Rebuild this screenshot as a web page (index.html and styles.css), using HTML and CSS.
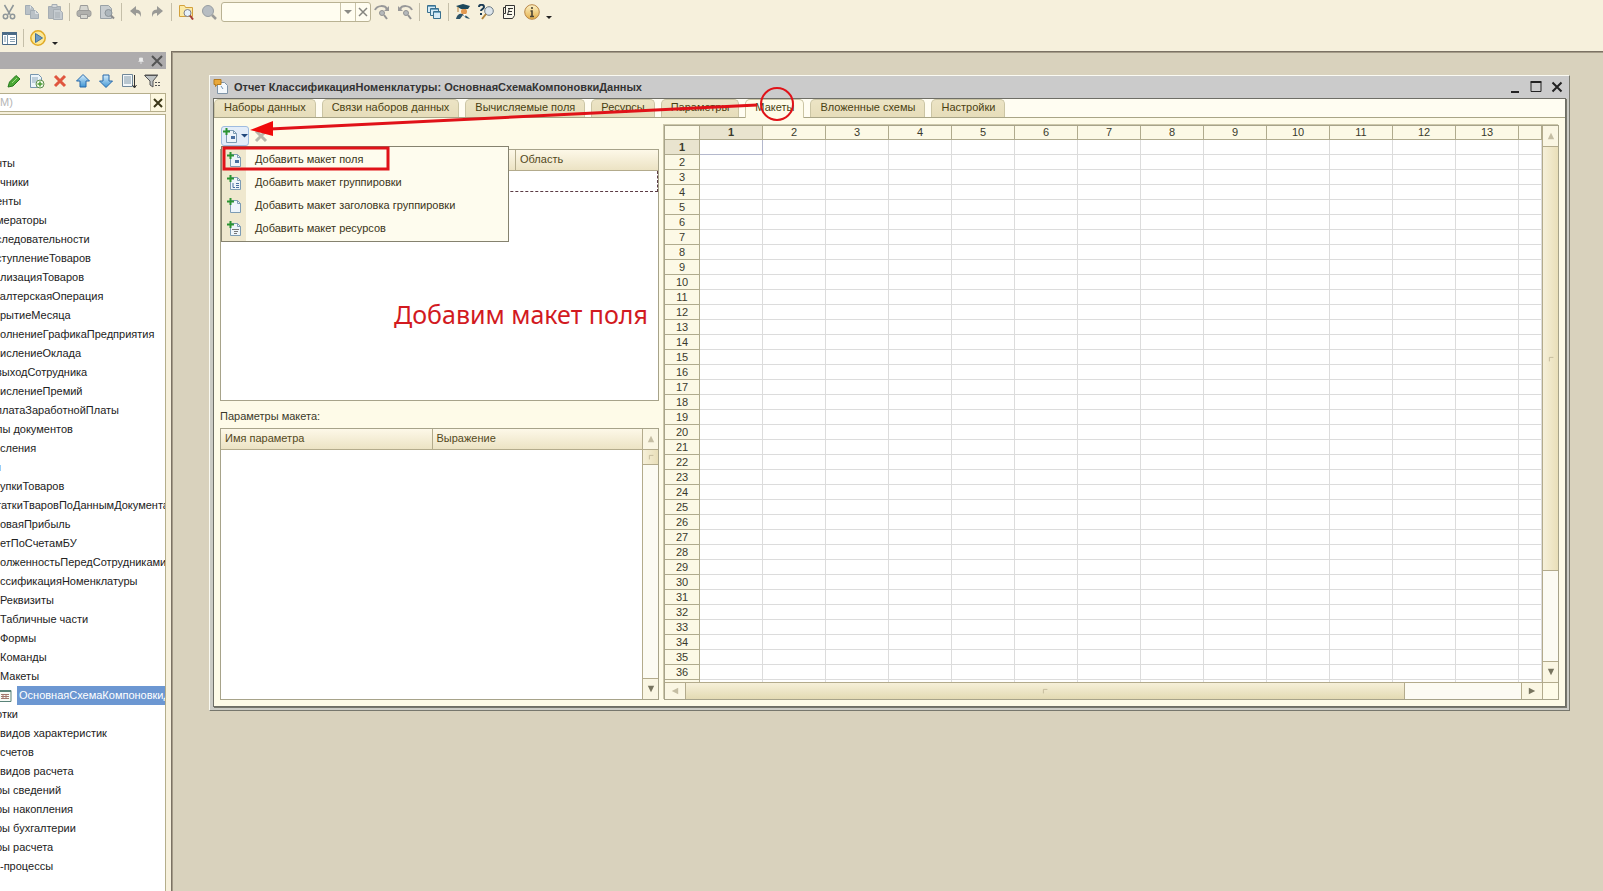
FILE: index.html
```
<!DOCTYPE html>
<html lang="ru">
<head>
<meta charset="utf-8">
<title>Конфигуратор</title>
<link rel="stylesheet" href="styles.css">
</head>
<body>
<svg class="defs" aria-hidden="true">
  <defs>
    <linearGradient id="gold" x1="0" y1="0" x2="0" y2="1"><stop offset="0" stop-color="#fdf3c8"/><stop offset="1" stop-color="#e5b04a"/></linearGradient>
    <linearGradient id="blue" x1="0" y1="0" x2="0" y2="1"><stop offset="0" stop-color="#d8effc"/><stop offset="1" stop-color="#3f95d4"/></linearGradient>
    <symbol id="sheet" viewBox="0 0 16 16"><path d="M3.500 2.500h7l3 3v9h-10z" fill="#eef5fa" stroke="#7d9cb4"/><path d="M10.500 2.500v3h3" fill="none" stroke="#7d9cb4"/><path d="M3.500 0v7M0 3.500h7" stroke="#2b9432" stroke-width="2"/></symbol>
  </defs>
</svg>
<div class="app">
  <header class="toolbars">
    <div class="bar">
      <button class="tool" aria-label="Вырезать"><svg viewBox="0 0 16 16" fill="none" stroke="#8e9699" stroke-width="1.500"><path d="M3.500 1l5.500 9.500M12.500 1L7 10.500"/><circle cx="4.500" cy="12.500" r="2.200"/><circle cx="11.500" cy="12.500" r="2.200"/></svg></button>
      <button class="tool" aria-label="Копировать"><svg viewBox="0 0 16 16" fill="#b9c1c7" stroke="#a3adb5"><path d="M1.500 1.500h5l3 3v6h-8z"/><path d="M6.500 6.500h5l3 3v5h-8z"/><path d="M11.500 6.500v3h3M6.500 1.500v3" fill="none" stroke="#dfe3e5"/></svg></button>
      <button class="tool" aria-label="Вставить"><svg viewBox="0 0 16 16" fill="#b5bbc0" stroke="#a6adb3"><path d="M1.500 2.500h12v12h-12z"/><path d="M5 .500h5v3H5z" fill="#d5d8da"/><path d="M6.500 5.500h6l3 3v7h-9z" fill="#c5cbd0"/><path d="M8 9h5M8 11h5M8 13h5" /></svg></button>
      <span class="sep"></span>
      <button class="tool" aria-label="Печать"><svg viewBox="0 0 16 16" fill="#b0b0ad" stroke="#9b9b99"><path d="M4.500 1.500h7l1 5h-9z" fill="#d6d6d0"/><rect x="1" y="6.500" width="14" height="6" rx="2"/><path d="M4.500 10.500h7v4h-7z" fill="#d6d6d0"/></svg></button>
      <button class="tool" aria-label="Просмотр"><svg viewBox="0 0 16 16"><path d="M1.500 1.500h8l3 3v10h-11z" fill="#c8cdd0" stroke="#9aa2a7"/><circle cx="9.500" cy="9" r="3.500" fill="#adb6bc" stroke="#8d959a"/><path d="M12 11.500l3 3" stroke="#8d8d8d" stroke-width="2"/></svg></button>
      <span class="sep"></span>
      <span class="pair">
        <button class="tool" aria-label="Отменить"><svg viewBox="0 0 16 16"><path d="M2 7l6-5v3.500c4 0 6 3 4.500 7.500C12 10 11 9 8 9v3z" fill="#9a9a96"/></svg></button>
        <button class="tool" aria-label="Вернуть"><svg viewBox="0 0 16 16"><path d="M14 7L8 2v3.500c-4 0-6 3-4.500 7.500C4 10 5 9 8 9v3z" fill="#9a9a96"/></svg></button>
      </span>
      <span class="sep"></span>
      <button class="tool" aria-label="Глобальный поиск"><svg viewBox="0 0 16 16"><path d="M1.500 1.500h5l1 2h7v9h-13z" fill="#fbe9a4" stroke="#d3a13c"/><circle cx="9.500" cy="9" r="3.500" fill="#e6f1fa" stroke="#7e7f8c"/><path d="M12 11.500l3 4" stroke="#a63b33" stroke-width="2"/></svg></button>
      <button class="tool" aria-label="Найти"><svg viewBox="0 0 16 16"><circle cx="7" cy="7" r="5.500" fill="#b7bdc2" stroke="#979da1"/><path d="M11 11l4 4" stroke="#9a9a98" stroke-width="2.500"/></svg></button>
      <div class="combo">
        <input type="text" aria-label="Строка поиска">
        <button aria-label="Список"><svg viewBox="0 0 14 16"><path d="M3 6h8L7 10z" fill="#8b8b86"/></svg></button>
        <button aria-label="Очистить"><svg viewBox="0 0 14 16"><path d="M3 4l8 8M11 4l-8 8" stroke="#85857f" stroke-width="1.500"/></svg></button>
      </div>
      <button class="tool" aria-label="Найти далее"><svg viewBox="0 0 16 16"><path d="M1 6c2-5 10-5 12-1" fill="none" stroke="#999" stroke-width="2"/><path d="M15 2v5h-5z" fill="#999"/><circle cx="8" cy="9" r="2.500" fill="#b5b9bb" stroke="#939393"/><path d="M10 11l3 4" stroke="#939393" stroke-width="2"/></svg></button>
      <button class="tool" aria-label="Найти ранее"><svg viewBox="0 0 16 16"><path d="M15 6C13 1 5 1 3 5" fill="none" stroke="#999" stroke-width="2"/><path d="M1 2v5h5z" fill="#999"/><circle cx="9" cy="9" r="2.500" fill="#b5b9bb" stroke="#939393"/><path d="M11 11l3 4" stroke="#939393" stroke-width="2"/></svg></button>
      <span class="sep"></span>
      <button class="tool" aria-label="Окна"><svg viewBox="0 0 16 16" fill="#d6ebf6" stroke="#39708f"><path d="M1.500 1.500h8v7h-8z"/><path d="M4.500 4.500h8v7h-8z"/><path d="M7.500 7.500h7v7h-7z"/><path d="M2 2.500h7M5 5.500h7M8 8.500h6" stroke="#6fa5c2"/></svg></button>
      <span class="sep"></span>
      <button class="tool" aria-label="Обучение"><svg viewBox="0 0 16 16"><path d="M1 15c1-5 4-6 7-5s5 3 7 5l-4-1-3-3-3 4z" fill="#2d5468"/><circle cx="9" cy="7.500" r="3" fill="#e29950"/><path d="M8 10l2 3 1-3z" fill="#fff"/><path d="M1 2l7-2 7 2-2 3H6z" fill="#1c485c"/><path d="M3 3v5" stroke="#b37c35"/></svg></button>
      <button class="tool" aria-label="Поиск в справке"><svg viewBox="0 0 16 16" fill="none"><path d="M1 3c0-3 5-3 5 0 0 2-3 2-3 4M3 9v2" stroke="#1b3c55" stroke-width="2"/><circle cx="11" cy="7" r="4.300" fill="#dde5eb" stroke="#6d7b86"/><path d="M8 10l-4 5" stroke="#b1853d" stroke-width="2"/></svg></button>
      <button class="tool" aria-label="Синтакс-помощник"><svg viewBox="0 0 16 16"><path d="M4.500 1.500h9v10l-2 3h-9v-5h2z" fill="#faf8ec" stroke="#333"/><path d="M4.500 3.500h-2v6M7 4.500h5M7 7.500h4M6 10.500h5M8.500 4l-2 7" fill="none" stroke="#333"/></svg></button>
      <button class="tool" aria-label="О программе"><svg viewBox="0 0 16 16"><circle cx="8" cy="8" r="7.300" fill="url(#gold)" stroke="#b98645"/><path d="M8 3v2M6.500 7H8v5M6 12.500h4" stroke="#4c4434" stroke-width="1.600" fill="none"/></svg></button>
      <svg class="caret" viewBox="0 0 6 16"><path d="M0 12h6l-3 3z" fill="#222"/></svg>
    </div>
    <div class="bar">
      <button class="tool" aria-label="Окно конфигурации"><svg viewBox="0 0 16 16"><path d="M1.500 2.500h14v12h-14z" fill="#fff" stroke="#4a6a86"/><path d="M1 3.500h15" stroke="#4a6a86" stroke-width="3"/><path d="M6.500 4v10M3 7h2M3 9h2M3 11h2" stroke="#7895aa"/><path d="M9 7.500h5M9 9.500h5M9 11.500h5" stroke="#8ba3b3"/></svg></button>
      <span class="sep"></span>
      <button class="tool" aria-label="Начать отладку"><svg viewBox="0 0 16 16"><circle cx="8" cy="8" r="7.200" fill="#fce896" stroke="#e0aa26" stroke-width="1.500"/><path d="M5.500 3.500v9l7-4.500z" fill="#6e9bc4" stroke="#416f9b"/></svg></button>
      <svg class="caret" viewBox="0 0 6 16"><path d="M0 12h6l-3 3z" fill="#222"/></svg>
    </div>
  </header>

  <div class="main">
    <aside class="side">
      <div class="side-title">
        <svg viewBox="0 0 16 16"><path d="M6 4h4v4H6zM4.500 8.500h7M8 9v3" fill="#eee" stroke="#eee"/></svg>
        <button class="tool" aria-label="Закрыть панель"><svg viewBox="0 0 16 16"><path d="M3 3l10 10M13 3L3 13" stroke="#555" stroke-width="2"/></svg></button>
      </div>
      <div class="side-tools">
        <button class="tool" aria-label="Изменить"><svg viewBox="0 0 16 16"><path d="M2 14l1.500-5L10 2.500l4 3.500-7 7z" fill="#4ca836" stroke="#277a1f"/><path d="M6 10l5-5" stroke="#9ddc83"/></svg></button>
        <button class="tool" aria-label="Добавить"><svg viewBox="0 0 16 16"><path d="M1.500 1.500h8l3 3v10h-11z" fill="#edf5fa" stroke="#7796ae"/><path d="M3 5h6M3 7h6M3 9h4" stroke="#8fa9bb"/><circle cx="11" cy="11" r="4" fill="#f2fae8" stroke="#5d8e4e"/><path d="M11 8.500v5M8.500 11h5" stroke="#4b9b36" stroke-width="1.500"/></svg></button>
        <button class="tool" aria-label="Удалить"><svg viewBox="0 0 16 16"><path d="M3 3l10 10M13 3L3 13" stroke="#e0563f" stroke-width="3"/></svg></button>
        <button class="tool" aria-label="Вверх"><svg viewBox="0 0 16 16"><path d="M8 1.500l6.500 6.500h-3.500v6H5V8H1.500z" fill="url(#blue)" stroke="#2769aa"/></svg></button>
        <button class="tool" aria-label="Вниз"><svg viewBox="0 0 16 16"><path d="M8 14.500L1.500 8H5V2h6v6h3.500z" fill="url(#blue)" stroke="#2769aa"/></svg></button>
        <button class="tool" aria-label="Сортировать"><svg viewBox="0 0 16 16"><path d="M1.500 1.500h10v12h-10z" fill="#f3f7f9" stroke="#6f8799"/><path d="M3 4h7M3 6h7M3 8h7M3 10h7" stroke="#8097a7"/><path d="M13.500 2v12M11.500 12l2 3 2-3" stroke="#333" fill="none"/></svg></button>
        <button class="tool" aria-label="Отбор"><svg viewBox="0 0 16 16"><path d="M.500 2.500h13L9 8v6l-3-2V8z" fill="#bfc3c4" stroke="#555"/><path d="M1 2h13M11 9.500h2M14 9.500h2M11 12.500h2M14 12.500h2" stroke="#555"/></svg></button>
      </div>
      <div class="side-search">
        <input type="text" placeholder="М)" aria-label="Поиск">
        <button aria-label="Очистить поиск"><svg viewBox="0 0 14 16"><path d="M3 4l8 8M11 4l-8 8" stroke="#3c3818" stroke-width="2"/></svg></button>
      </div>
      <ul class="tree">
        <li class="cut">нты</li>
        <li>чники</li>
        <li class="cut">енты</li>
        <li class="cut far">мераторы</li>
        <li class="cut">следовательности</li>
        <li class="cut">ступлениеТоваров</li>
        <li>лизацияТоваров</li>
        <li class="cut">галтерскаяОперация</li>
        <li>рытиеМесяца</li>
        <li>олнениеГрафикаПредприятия</li>
        <li>ислениеОклада</li>
        <li class="cut">выходСотрудника</li>
        <li>ислениеПремий</li>
        <li class="cut">платаЗаработнойПлаты</li>
        <li class="cut">лы документов</li>
        <li>сления</li>
        <li class="edge">ы</li>
        <li>упкиТоваров</li>
        <li class="cut">таткиТваровПоДаннымДокумента</li>
        <li>оваяПрибыль</li>
        <li>етПоСчетамБУ</li>
        <li>олженностьПередСотрудниками</li>
        <li>ссификацияНоменклатуры</li>
        <li>Реквизиты</li>
        <li>Табличные части</li>
        <li>Формы</li>
        <li>Команды</li>
        <li>Макеты</li>
        <li class="current"><svg viewBox="0 0 12 14"><path d="M-1 1.500h12v11h-12z" fill="#f6faf6" stroke="#5a8379"/><path d="M-1 2.500h12" stroke="#5a8379"/><path d="M1 5.500h8M1 7.500h8M1 9.500h8M3 5v5M6 5v5" stroke="#a3776f"/></svg><span>ОсновнаяСхемаКомпоновкиДанных</span></li>
        <li class="cut">отки</li>
        <li>видов характеристик</li>
        <li>счетов</li>
        <li>видов расчета</li>
        <li class="cut">ры сведений</li>
        <li class="cut">ры накопления</li>
        <li class="cut">ры бухгалтерии</li>
        <li class="cut">ры расчета</li>
        <li>-процессы</li>
      </ul>
    </aside>

    <main class="desk">
      <section class="window">
        <div class="title">
          <svg class="title-icon" viewBox="0 0 16 16"><path d="M4.500 3.500h7l3 3v8h-10z" fill="#f5f9fc" stroke="#8095a8"/><path d="M1 .500h7v5H4l-1.500 2V5.500H1z" fill="#eaa83a" stroke="#b57a1d"/><path d="M8 7l2 3" stroke="#6f94b8"/></svg>
          <h1>Отчет КлассификацияНоменклатуры: ОсновнаяСхемаКомпоновкиДанных</h1>
          <button class="win" aria-label="Свернуть"><svg viewBox="0 0 16 16"><path d="M4 13h8" stroke="#222" stroke-width="2"/></svg></button>
          <button class="win" aria-label="Развернуть"><svg viewBox="0 0 16 16"><path d="M3 3.500h10v9H3z" fill="none" stroke="#222"/><path d="M2.500 3h11" stroke="#222" stroke-width="2"/></svg></button>
          <button class="win" aria-label="Закрыть"><svg viewBox="0 0 16 16"><path d="M3.500 3.500l9 9M12.500 3.500l-9 9" stroke="#222" stroke-width="2"/></svg></button>
        </div>
        <div class="client">
          <nav class="tabs">
            <button>Наборы данных</button>
            <button>Связи наборов данных</button>
            <button>Вычисляемые поля</button>
            <button>Ресурсы</button>
            <button>Параметры</button>
            <button class="active">Макеты</button>
            <button>Вложенные схемы</button>
            <button>Настройки</button>
          </nav>
          <div class="body">
            <div class="left">
              <div class="local-tools">
                <button class="add" aria-label="Добавить макет"><svg width="16" height="16"><use href="#sheet"/><path d="M8 8h4v3H8z" fill="#496fa0"/></svg><svg width="8" height="16"><path d="M0 6h7L3.500 9.500z" fill="#21487c"/></svg></button>
                <svg class="del" viewBox="0 0 16 16"><path d="M3 3l10 10M13 3L3 13" stroke="#b9b6aa" stroke-width="3"/></svg>
              </div>
              <div class="box templates">
                <table>
                  <colgroup><col class="two-thirds"><col></colgroup>
                  <thead><tr><th></th><th>Область</th></tr></thead>
                  <tbody><tr><td class="dashed" colspan="2"></td></tr></tbody>
                </table>
              </div>
              <div class="menu" role="menu">
                <button role="menuitem"><svg viewBox="0 0 16 16"><use href="#sheet"/><path d="M8 8h4v3H8z" fill="#496fa0"/></svg>Добавить макет поля</button>
                <button role="menuitem"><svg viewBox="0 0 16 16"><use href="#sheet"/><path d="M6 8v4.500h2M9 8.500h3M9 10.500h3M9 12.500h3" fill="none" stroke="#496fa0"/></svg>Добавить макет группировки</button>
                <button role="menuitem"><svg viewBox="0 0 16 16"><use href="#sheet"/></svg>Добавить макет заголовка группировки</button>
                <button role="menuitem"><svg viewBox="0 0 16 16"><use href="#sheet"/><path d="M5 8.500h7M7 10.500h4M7 12.500h3" stroke="#777"/></svg>Добавить макет ресурсов</button>
              </div>
              <p class="caption">Параметры макета:</p>
              <div class="box params">
                <table>
                  <thead><tr><th>Имя параметра</th><th>Выражение</th></tr></thead>
                </table>
                <div class="vscroll">
                  <span class="step head"><svg viewBox="0 0 10 10"><path d="M1 9h8L5 1z" fill="#c4bda3"/></svg></span>
                  <span class="thumb small"><svg viewBox="0 0 10 10"><path d="M3 8V3h5" stroke="#bdb494" fill="none"/></svg></span>
                  <span class="track"></span>
                  <span class="step"><svg viewBox="0 0 10 10"><path d="M1 1h8L5 9z" fill="#77745f"/></svg></span>
                </div>
              </div>
            </div>
            <div class="sheet">
              <div class="cells">
                <table id="grid"></table>
              </div>
              <div class="vscroll">
                <span class="step"><svg viewBox="0 0 10 10"><path d="M1 9h8L5 1z" fill="#c4bda3"/></svg></span>
                <span class="thumb tall"><svg viewBox="0 0 10 10"><path d="M3 8V3h5" stroke="#bdb494" fill="none"/></svg></span>
                <span class="track"></span>
                <span class="step"><svg viewBox="0 0 10 10"><path d="M1 1h8L5 9z" fill="#77745f"/></svg></span>
              </div>
              <div class="hscroll">
                <span class="step"><svg viewBox="0 0 10 10"><path d="M9 1v8L1 5z" fill="#c4bda3"/></svg></span>
                <span class="thumb wide"><svg viewBox="0 0 10 10"><path d="M3 8V3h5" stroke="#bdb494" fill="none"/></svg></span>
                <span class="track"></span>
                <span class="step"><svg viewBox="0 0 10 10"><path d="M1 1v8l8-4z" fill="#77745f"/></svg></span>
              </div>
              <div class="corner"></div>
            </div>
          </div>
        </div>
      </section>
    </main>
  </div>

  <svg class="marks" width="820" height="200" fill="none" stroke="#e01218" aria-hidden="true">
    <path d="M757 105L270 129" stroke-width="3"/>
    <path d="M250 130l23-9v15z" fill="#f00a0a" stroke="none"/>
    <circle cx="777" cy="104" r="16" stroke-width="2"/>
    <rect x="224" y="148" width="164" height="21" stroke-width="3"/>
  </svg>
  <p class="note">Добавим макет поля</p>
</div>
<script src="grid.js"></script>
</body>
</html>
```
FILE: styles.css
```
* { box-sizing: border-box; }
body { margin: 0; font: 11px/13px "Liberation Sans", Arial, sans-serif; color: #222; }
button, input { font: inherit; color: inherit; margin: 0; padding: 0; border: 0; background: none; border-radius: 0; }
svg { display: block; flex: none; }
table { border-collapse: separate; border-spacing: 0; table-layout: fixed; }
.defs { position: absolute; width: 0; height: 0; }

.app { position: relative; height: 100vh; display: flex; flex-direction: column; overflow: hidden; background: #f6f0dc; }
.toolbars { height: 51px; flex: none; }
.bar { display: flex; align-items: center; gap: 7px; height: 28px; padding-left: 1px; }
.bar:first-child { height: 24px; }
.tool, .tool svg { width: 16px; height: 16px; flex: none; }
.sep { width: 1px; height: 18px; margin: 0 0 0 -1px; background: #c5bfa9; flex: none; }
.sep + .tool, .sep + .pair { margin-left: -1px; }
.pair { display: flex; gap: 5px; }
.caret { width: 6px; height: 16px; margin-left: -1px; }
.combo { display: flex; width: 150px; height: 20px; margin: 0 -4px 0 -3px; border: 1px solid #b9b293; border-radius: 3px; background: #fffdf0; }
.combo input { flex: 1; min-width: 0; }
.combo button { width: 15px; border-left: 1px solid #c9c3a9; }
.combo svg { width: 14px; height: 16px; }

.main { flex: 1; display: flex; min-height: 0; }
.side { width: 166px; flex: none; display: flex; flex-direction: column; margin-right: 5px; padding-top: 1px; }
.side-title { height: 17px; display: flex; justify-content: flex-end; align-items: center; padding-right: 1px; background: #aeacad; }
.side-title > svg { width: 16px; height: 12px; }
.side-tools { height: 24px; display: flex; align-items: center; gap: 7px; padding-left: 6px; }
.side-search { height: 19px; display: flex; border: 1px solid #b5ae8b; border-left: 0; background: #fff; }
.side-search input { flex: 1; min-width: 0; }
.side-search input::placeholder { color: #b5b5b5; opacity: 1; }
.side-search button { width: 15px; border-left: 1px solid #c9c3a9; background: #fdf8e0; }
.side-search svg { width: 14px; height: 16px; }
.tree { flex: 1; min-height: 0; margin: 2px 0 0; padding: 39px 0 0; list-style: none; overflow: hidden; white-space: nowrap; background: #fff; border: solid #b5ae8b; border-width: 1px 1px 0 0; }
.tree li { height: 19px; line-height: 19px; }
.tree .cut { margin-left: -4px; }
.tree .edge { margin-left: -7px; }
.tree .current { display: flex; align-items: center; gap: 5px; }
.current svg { width: 12px; height: 14px; }
.current span { flex: 1; padding-left: 2px; color: #fff; background: #6c97d2; overflow: hidden; }

.desk { flex: 1; min-width: 0; display: flex; padding: 23px 33px 180px 37px; background: #d9d2bd; border: solid #7b7264; border-width: 1px 0 0 1px; box-shadow: inset 1px 1px #a49b88; }
.window { flex: 1; min-width: 0; display: flex; flex-direction: column; padding: 0 3px 3px; background: #cbcbc5; border: 1px solid #fafaf2; border-right-color: #77776d; border-bottom-color: #77776d; }
.title { height: 22px; flex: none; display: flex; align-items: center; gap: 5px; margin: 0 -3px; padding: 0 4px 0 3px; background: #cbcbcb; }
.title-icon { width: 16px; height: 16px; }
.title h1 { flex: 1; margin: 0; font-size: 11px; line-height: 13px; color: #333; }
.win, .win svg { width: 16px; height: 16px; }
.client { flex: 1; min-height: 0; display: flex; flex-direction: column; background: #fefbe8; border: 1px solid #6e6e66; box-shadow: 1px 1px #77776d; }

.tabs { height: 19px; flex: none; display: flex; gap: 6px; background: #fffdf2; border-bottom: 1px solid #a9a587; }
.tabs button { height: 18px; padding: 0 9px 2px; color: #4a3f12; background: linear-gradient(#ece4c5, #e6ddba); border: 1px solid #cbc5a4; border-bottom: 0; border-radius: 5px 5px 0 0; }
.tabs .active { height: 19px; padding-bottom: 3px; background: #fefbe8; }

.body { flex: 1; min-height: 0; display: grid; grid-template-columns: 439px minmax(0, 1fr); gap: 5px; padding: 7px 6px 6px 6px; }
.left { position: relative; min-height: 0; display: flex; flex-direction: column; }
.local-tools { height: 24px; flex: none; display: flex; align-items: flex-start; gap: 4px; padding: 1px; }
.add { display: flex; align-items: center; gap: 2px; width: 28px; height: 20px; padding-left: 1px; border: 1px solid #9fbce0; border-radius: 3px; background: #e3edf9; }
.del { width: 16px; height: 16px; margin-top: 2px; }
.box { background: #fff; border: 1px solid #a7a38a; }
.box table { width: 100%; }
.box th { height: 21px; padding: 0 4px 2px; text-align: left; font-weight: normal; color: #54491c; background: linear-gradient(#fdf8e8, #ece3c4); border-bottom: 1px solid #b3ab8c; }
.box th + th { border-left: 1px solid #b3ab8c; }
.templates { height: 252px; flex: none; }
.two-thirds { width: 294px; }
.dashed { height: 21px; padding: 0; border: 1px dashed #5b3b44; border-top-width: 0; }
.caption { margin: 9px 0 5px; color: #3b3a2b; }
.params { flex: 1; min-height: 0; display: flex; align-items: flex-start; }
.params table { flex: 1; }

.menu { position: absolute; left: 1px; top: 21px; width: 288px; padding: 1px 0; border: 1px solid #85826f; background: linear-gradient(90deg, #efe8ce 24px, #fefcee 24px); }
.menu button { display: flex; align-items: center; gap: 12px; width: 100%; height: 23px; padding-left: 5px; color: #3b3520; }
.menu svg { width: 16px; height: 16px; }

.vscroll { align-self: stretch; width: 16px; display: flex; flex-direction: column; border-left: 1px solid #b3ab8c; background: #fcfbf3; }
.hscroll { height: 17px; display: flex; border-top: 1px solid #b3ab8c; background: #fcfbf3; }
.step, .thumb { display: flex; align-items: center; justify-content: center; flex: none; }
.step svg, .thumb svg { width: 8px; height: 8px; }
.track { flex: 1; }
.vscroll .step { height: 21px; background: #faf6e3; border-top: 1px solid #b3ab8c; }
.vscroll .step:first-child { border-top: 0; border-bottom: 1px solid #b3ab8c; }
.vscroll .thumb { background: linear-gradient(90deg, #f6f0d9, #e9dfb9); border-bottom: 1px solid #b3ab8c; }
.small { height: 15px; }
.hscroll .step { width: 21px; background: #faf6e3; border-left: 1px solid #b3ab8c; }
.hscroll .step:first-child { border-left: 0; border-right: 1px solid #b3ab8c; }
.hscroll .thumb { background: linear-gradient(#f6f0d9, #e3dab3); border-right: 1px solid #b3ab8c; }
.wide { width: 82%; }

.sheet { min-height: 0; display: grid; grid-template: minmax(0, 1fr) 17px / minmax(0, 1fr) 16px; background: #fff; border: 1px solid #a7a38a; box-shadow: -1px -1px #cdc8ab; }
.tall { height: 424px; }
.corner { background: #fefbe8; border: solid #b3ab8c; border-width: 1px 0 0 1px; }
.cells { overflow: hidden; }
.cells table { width: 100%; }
.cells .rows { width: 35px; }
.cells .unit { width: 63px; }
.cells th, .cells td { height: 15px; padding: 0; border: solid #dcdcdc; border-width: 0 1px 1px 0; text-align: center; line-height: 14px; }
.cells thead th { height: 14px; line-height: 13px; }
.cells th { font-weight: normal; color: #3a3a2c; background: #fcf9e6; border-color: #b0ab8e; }
.cells th.on { font-weight: bold; background: #e9e4cf; }
.cells td.on { border-color: #b4b8cc; }

.marks { position: absolute; left: 0; top: 0; pointer-events: none; }
.note { position: absolute; left: 394px; top: 296px; margin: 0; font: 25px/36px "Noto Sans", sans-serif; color: #d21a1f; white-space: nowrap; }
```
FILE: grid.js
```
const grid = document.getElementById('grid');
const columns = 13;
const rows = 37;

let html = '<colgroup><col class="rows">' + '<col class="unit">'.repeat(columns) + '<col></colgroup><thead><tr><th></th>';
for (let c = 1; c <= columns; c++) {
  html += `<th${c === 1 ? ' class="on"' : ''}>${c}</th>`;
}
html += '<th></th></tr></thead><tbody>';
for (let r = 1; r <= rows; r++) {
  const mark = r === 1 ? ' class="on"' : '';
  html += `<tr><th${mark}>${r < rows ? r : ''}</th><td${mark}></td>` + '<td></td>'.repeat(columns) + '</tr>';
}
grid.innerHTML = html + '</tbody>';
```
